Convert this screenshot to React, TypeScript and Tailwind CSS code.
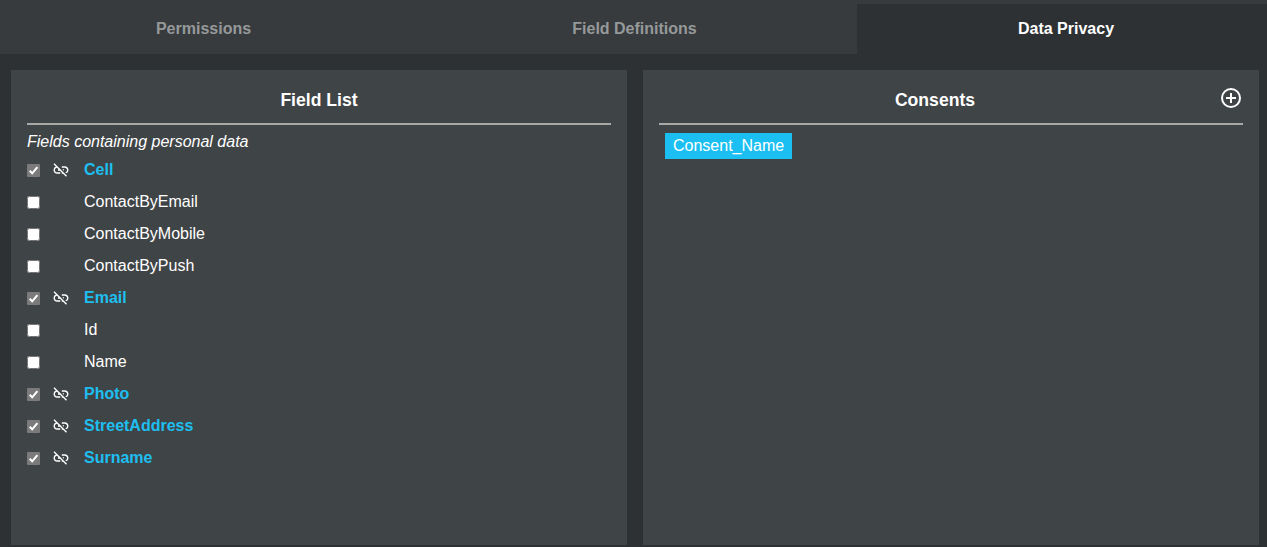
import React from "react";
import { MdLinkOff } from "react-icons/md";

type Field = { name: string; personal?: boolean };

const fields: Field[] = [
  { name: "Cell", personal: true },
  { name: "ContactByEmail" },
  { name: "ContactByMobile" },
  { name: "ContactByPush" },
  { name: "Email", personal: true },
  { name: "Id" },
  { name: "Name" },
  { name: "Photo", personal: true },
  { name: "StreetAddress", personal: true },
  { name: "Surname", personal: true },
];

function LockedCheck() {
  return (
    <span role="checkbox" aria-checked="true" aria-disabled="true" className="block size-[13px] rounded-[1px] bg-[#7b7b7b]">
      <svg viewBox="0 0 13 13" className="size-full" fill="none" stroke="#fff" strokeWidth="2">
        <path d="M2.7 6.8 5.2 9.3 10.4 3.2" />
      </svg>
    </span>
  );
}

function FieldRow({ name, personal }: Field) {
  return (
    <li className="flex h-8 items-start">
      <span className="w-[26px] pt-[9px]">
        {personal ? <LockedCheck /> : <input type="checkbox" aria-label={name} className="block size-[13px]" />}
      </span>
      <span className="w-[31px] pt-[6px]">
        {personal && <MdLinkOff className="-ml-px size-[18px] stroke-none text-white" />}
      </span>
      <span className={personal ? "pt-[3px] font-bold text-[#1ebff0]" : "pt-[3px] text-white"}>{name}</span>
    </li>
  );
}

function Panel({ title, action, children }: { title: string; action?: React.ReactNode; children: React.ReactNode }) {
  return (
    <section className="h-[475px] flex-1 bg-[#3f4446] px-4">
      <header className="flex h-[55px] items-center border-b-2 border-[#a9aaa8] pt-[6px]">
        <h2 className="flex-1 text-center text-[17.6px] leading-6 font-bold text-white">{title}</h2>
        {action}
      </header>
      {children}
    </section>
  );
}

export default function App() {
  return (
    <main className="h-[547px] w-full overflow-hidden bg-[#2d3133] font-['Liberation_Sans',Arial,sans-serif] text-base leading-6">
      <nav className="flex h-[54px] border-t-4 border-[#373b3d] bg-[#373b3d] font-bold text-[#96999a]">
        <button className="w-[411px] pr-1 pb-px">Permissions</button>
        <button className="w-[446px] pb-px pl-px">Field Definitions</button>
        <button className="flex-1 bg-[#2d3133] pb-px pl-2 text-white">Data Privacy</button>
      </nav>
      <div className="flex gap-4 pt-4 pr-2 pl-[11px]">
        <Panel title="Field List">
          <p className="pt-[5px] text-white italic">Fields containing personal data</p>
          <ul className="pt-px">
            {fields.map((f) => (
              <FieldRow key={f.name} {...f} />
            ))}
          </ul>
        </Panel>
        <Panel
          title="Consents"
          action={
            <button aria-label="Add consent" className="ml-2 pb-[3px]">
              <svg viewBox="0 0 24 24" className="size-6 text-white" fill="none" stroke="currentColor" strokeWidth="2">
                <circle cx="12" cy="12" r="9" />
                <path d="M12 7v10M7 12h10" />
              </svg>
            </button>
          }
        >
          <div className="pt-2 pl-[6px]">
            <span className="flex h-[26px] w-fit items-center bg-[#1cbff2] px-2 text-white">Consent_Name</span>
          </div>
        </Panel>
      </div>
    </main>
  );
}
